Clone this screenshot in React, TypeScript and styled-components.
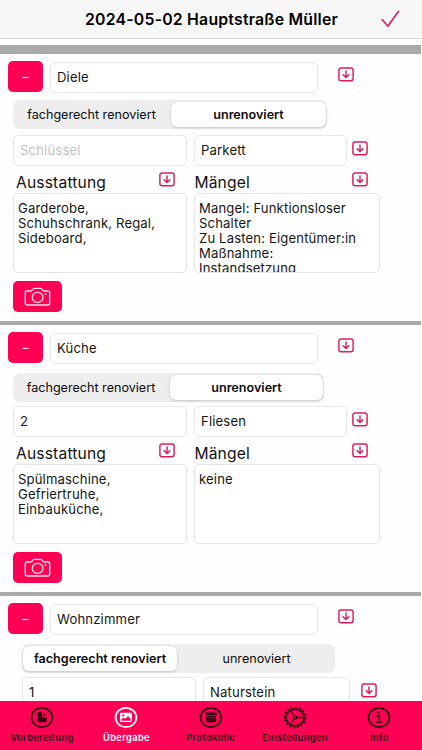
import React from "react";
import styled, { createGlobalStyle } from "styled-components";

const PINK = "#ff0055";
const ACCENT = "#dc1c5c";

const Global = createGlobalStyle`
  * { box-sizing: border-box; }
  html, body { margin: 0; padding: 0; background: #fff; }
  body { font-family: Inter, "Liberation Sans", sans-serif; color: #111; overflow: hidden; }
  svg { display: block; flex: none; }
`;

const Screen = styled.div`
  width: 422px;
  height: 750px;
  display: flex;
  flex-direction: column;
  overflow: hidden;
  background: #fefefe;
`;

const Header = styled.header`
  flex: none;
  height: 39px;
  display: grid;
  grid-template-columns: 60px 1fr 60px;
  align-items: center;
  background: #f7f7f7;
  border-bottom: 1px solid #d9d9d9;
`;

const Title = styled.h1`
  grid-column: 2;
  margin: 0;
  padding-left: 1px;
  text-align: center;
  white-space: nowrap;
  font-size: 15.8px;
  line-height: 37px;
  font-weight: 600;
  letter-spacing: 0.22px;
  color: #000;
`;

const Confirm = styled.button`
  border: 0;
  background: none;
  padding: 0 0 0 19px;
`;

const Content = styled.main`
  flex: 1;
  min-height: 0;
  overflow: hidden;
  padding-top: 6px;
`;

const Divider = styled.div<{ $height: number }>`
  width: 421px;
  height: ${(p) => p.$height}px;
  background: #a9a9a9;
`;

const RoomBox = styled.section<{ $height: number }>`
  height: ${(p) => p.$height}px;
  padding-top: 7px;
`;

const NameRow = styled.div`
  display: flex;
  height: 31px;
  padding-left: 8px;
`;

const RemoveButton = styled.button`
  width: 35px;
  height: 31px;
  margin-right: 7px;
  padding: 0;
  border: 0;
  border-radius: 5px;
  background: ${PINK};
  color: #ffe3ec;
  font: 500 12px/31px Inter, sans-serif;
`;

const Field = styled.div<{ $width: number; $placeholder?: boolean }>`
  width: ${(p) => p.$width}px;
  height: 31px;
  flex: none;
  padding-left: 6px;
  border: 1px solid #e8e8e8;
  border-radius: 5px;
  background: #fff;
  font-size: 13.1px;
  line-height: 29px;
  letter-spacing: 0.16px;
  color: ${(p) => (p.$placeholder ? "#c3c3c5" : "#151515")};
`;

const NameField = styled(Field)`
  margin-top: 1px;
`;

const PickButton = styled.button<{ $left: number; $top: number }>`
  margin: ${(p) => p.$top}px 0 0 ${(p) => p.$left}px;
  padding: 0;
  border: 0;
  background: none;
  width: 16px;
  height: 15px;
`;

const Segments = styled.div<{ $width: number; $first: number; $left: number; $top: number }>`
  display: grid;
  grid-template-columns: ${(p) => p.$first}px 1fr;
  width: ${(p) => p.$width}px;
  height: 29px;
  margin: ${(p) => p.$top}px 0 0 ${(p) => p.$left}px;
  padding: 2px 1px;
  border-radius: 7px;
  background: #eeeeef;
`;

const Segment = styled.div<{ $active: boolean }>`
  text-align: center;
  border-radius: 6px;
  white-space: nowrap;
  font-size: 12.6px;
  line-height: 25px;
  font-weight: ${(p) => (p.$active ? 600 : 400)};
  letter-spacing: 0;
  color: #0c0c0c;
  background: ${(p) => (p.$active ? "#fff" : "transparent")};
  box-shadow: ${(p) => (p.$active ? "0 1px 3px rgba(0,0,0,.17), 0 0 1px rgba(0,0,0,.12)" : "none")};

  &:first-child {
    padding-right: ${(p) => (p.$active ? 0 : 2)}px;
  }

  &:last-child {
    padding-left: ${(p) => (p.$active ? 0 : 2)}px;
  }
`;

const FieldRow = styled.div<{ $left: number; $top: number }>`
  display: flex;
  height: 31px;
  gap: 7px;
  margin: ${(p) => p.$top}px 0 0 ${(p) => p.$left}px;
`;

const Columns = styled.div`
  display: grid;
  grid-template-columns: 174px 186px;
  column-gap: 7px;
  margin-left: 13px;
`;

const Heading = styled.div<{ $indent: number; $gap: number }>`
  display: flex;
  justify-content: space-between;
  height: 27px;
  padding: 0 ${(p) => p.$gap}px 0 ${(p) => p.$indent}px;
  font-size: 15.6px;
  line-height: 33px;
  letter-spacing: 0.17px;
  color: #111;
`;

const Notes = styled.div`
  height: 80px;
  overflow: hidden;
  padding: 7px 4px 0;
  border: 1px solid #e6e6e6;
  border-radius: 5px;
  background: #fff;
  white-space: pre-line;
  font-size: 13.1px;
  line-height: 15px;
  letter-spacing: 0.15px;
  color: #151515;
`;

const PhotoButton = styled.button`
  display: flex;
  align-items: center;
  justify-content: center;
  width: 49px;
  height: 31px;
  margin: 8px 0 0 13px;
  padding: 0;
  border: 0;
  border-radius: 5px;
  background: ${PINK};
`;

const TabBar = styled.nav`
  flex: none;
  height: 49px;
  display: grid;
  grid-template-columns: repeat(5, 84.3px);
  background: ${PINK};
`;

const Tab = styled.div<{ $active: boolean }>`
  display: flex;
  flex-direction: column;
  align-items: center;
  padding-top: 5px;
  color: ${(p) => (p.$active ? "#fff" : "#300012")};
`;

const TabLabel = styled.span`
  margin-top: 3px;
  white-space: nowrap;
  font-size: 9.3px;
  line-height: 12px;
  font-weight: 600;
  letter-spacing: 0.37px;
`;

const DownIcon = () => (
  <svg width="16" height="15" viewBox="0 0 16 15" fill="none" stroke={ACCENT} strokeWidth="1.45" strokeLinecap="round" strokeLinejoin="round">
    <rect x="0.9" y="0.9" width="14.2" height="12.9" rx="2.2" />
    <path d="M8 3.9V10.4M5.1 7.8L8 10.5L10.9 7.8" />
  </svg>
);

const CheckIcon = () => (
  <svg width="20" height="18" viewBox="0 0 20 18" fill="none" stroke={ACCENT} strokeWidth="1.6" strokeLinecap="round" strokeLinejoin="round">
    <path d="M1.2 9.6L6.8 16.2L17.6 1.3" />
  </svg>
);

const CameraIcon = () => (
  <svg width="27" height="20" viewBox="0 0 27 20" fill="none" stroke="#ffe0ea" strokeWidth="1.35" strokeLinejoin="round">
    <path d="M3.3 4H6.8C8.4 4 8.6 1.3 10.2 1.3H16.7C18.3 1.3 18.5 4 20.1 4H23.8Q25.7 4 25.7 5.7V16.3Q25.7 18 23.8 18H3.3Q1.3 18 1.3 16.3V5.7Q1.3 4 3.3 4Z" />
    <ellipse cx="13.6" cy="10.4" rx="5.3" ry="5" />
    <circle cx="21.4" cy="7" r="1" fill="#ffe0ea" stroke="none" />
  </svg>
);

const Ring = ({ children }: { children: React.ReactNode }) => (
  <svg width="24" height="23" viewBox="0 0 24 23">
    <ellipse cx="12" cy="11.5" rx="10.4" ry="9.6" fill="none" stroke="currentColor" strokeWidth="1.8" />
    {children}
  </svg>
);

const DocumentIcon = () => (
  <Ring>
    <path d="M7.7 7Q7.7 6 8.7 6H12V10.2Q12 11 12.8 11H16.7V15.3Q16.7 16.3 15.7 16.3H8.7Q7.7 16.3 7.7 15.3Z M13 6.1L16.6 9.9H13Z" fill="currentColor" />
  </Ring>
);

const PhotoIcon = () => (
  <Ring>
    <path fillRule="evenodd" d="M7.2 6.7H16.8Q18 6.7 18 7.9V14.9Q18 16.1 16.8 16.1H7.2Q6 16.1 6 14.9V7.9Q6 6.7 7.2 6.7Z M7.2 14.8H16.8V13.2L14 10L11.4 13L9.7 11.6L7.2 13.6Z" fill="currentColor" />
    <circle cx="9.2" cy="9.3" r="1.1" fill={PINK} />
  </Ring>
);

const ArchiveIcon = () => (
  <Ring>
    <rect x="6.2" y="6.4" width="11.6" height="2.8" rx="0.7" fill="currentColor" />
    <path d="M7.2 10H16.8V15Q16.8 16.2 15.6 16.2H8.4Q7.2 16.2 7.2 15Z" fill="currentColor" />
    <path d="M10 11.8H14" stroke={PINK} strokeWidth="0.9" strokeLinecap="round" />
  </Ring>
);

const GearIcon = () => (
  <svg width="26" height="23" viewBox="0 0 26 23" fill="none" stroke="currentColor">
    <ellipse cx="13" cy="11.5" rx="10.8" ry="10" strokeWidth="1.8" pathLength="64" strokeDasharray="2 2" />
    <ellipse cx="13" cy="11.5" rx="9.1" ry="8.3" strokeWidth="1.8" />
    <circle cx="13" cy="11.5" r="1.6" strokeWidth="1.3" />
    <path d="M12.1 10L8.4 4.5M12.1 13L8.4 18.5M14.7 11.5H22" strokeWidth="1.3" />
  </svg>
);

const InfoIcon = () => (
  <Ring>
    <circle cx="11.7" cy="6.9" r="1.4" fill="currentColor" />
    <path d="M9.3 10H12.3V15.5M9 15.9H15.2" fill="none" stroke="currentColor" strokeWidth="1.6" />
  </Ring>
);

const Pick = ({ left, top }: { left: number; top: number }) => (
  <PickButton $left={left} $top={top}>
    <DownIcon />
  </PickButton>
);

interface RoomData {
  name: string;
  renovated: boolean;
  keys: string;
  floor: string;
  items?: string;
  defects?: string;
  inset: number;
  segmentWidth: number;
  firstSegment: number;
  segmentTop: number;
  height: number;
}

const rooms: RoomData[] = [
  {
    name: "Diele", renovated: false, keys: "", floor: "Parkett",
    items: "Garderobe,\nSchuhschrank, Regal,\nSideboard,",
    defects: "Mangel: Funktionsloser\nSchalter\nZu Lasten: Eigentümer:in\nMaßnahme:\nInstandsetzung",
    inset: 13, segmentWidth: 314, firstSegment: 157, segmentTop: 8, height: 267,
  },
  {
    name: "Küche", renovated: false, keys: "2", floor: "Fliesen",
    items: "Spülmaschine,\nGefriertruhe,\nEinbauküche,", defects: "keine",
    inset: 13, segmentWidth: 311, firstSegment: 156, segmentTop: 10, height: 267,
  },
  {
    name: "Wohnzimmer", renovated: true, keys: "1", floor: "Naturstein",
    inset: 22, segmentWidth: 313, firstSegment: 154, segmentTop: 10, height: 120,
  },
];

const Room = ({ room }: { room: RoomData }) => (
  <RoomBox $height={room.height}>
    <NameRow>
      <RemoveButton>–</RemoveButton>
      <NameField $width={268}>{room.name}</NameField>
      <Pick left={20} top={6} />
    </NameRow>
    <Segments $width={room.segmentWidth} $first={room.firstSegment} $left={room.inset} $top={room.segmentTop}>
      <Segment $active={room.renovated}>fachgerecht renoviert</Segment>
      <Segment $active={!room.renovated}>unrenoviert</Segment>
    </Segments>
    <FieldRow $left={room.inset} $top={14 - room.segmentTop}>
      <Field $width={174} $placeholder={!room.keys}>{room.keys || "Schlüssel"}</Field>
      <Field $width={room.inset === 13 ? 153 : 147}>{room.floor}</Field>
      <Pick left={room.inset === 13 ? -2 : 4} top={6} />
    </FieldRow>
    {room.items && (
      <>
        <Columns>
          <Heading $indent={3} $gap={12}>Ausstattung<Pick left={0} top={6} /></Heading>
          <Heading $indent={0.4} $gap={12}>Mängel<Pick left={0} top={6} /></Heading>
          <Notes>{room.items}</Notes>
          <Notes>{room.defects}</Notes>
        </Columns>
        <PhotoButton><CameraIcon /></PhotoButton>
      </>
    )}
  </RoomBox>
);

const tabs = [
  { label: "Vorbereitung", icon: <DocumentIcon /> },
  { label: "Übergabe", icon: <PhotoIcon />, active: true },
  { label: "Protokolle", icon: <ArchiveIcon /> },
  { label: "Einstellungen", icon: <GearIcon /> },
  { label: "Info", icon: <InfoIcon /> },
];

export default function App() {
  return (
    <Screen>
      <Global />
      <Header>
        <Title>2024-05-02 Hauptstraße Müller</Title>
        <Confirm><CheckIcon /></Confirm>
      </Header>
      <Content>
        {rooms.map((room, i) => (
          <React.Fragment key={room.name}>
            <Divider $height={i === 0 ? 9 : 4} />
            <Room room={room} />
          </React.Fragment>
        ))}
      </Content>
      <TabBar>
        {tabs.map((tab) => (
          <Tab key={tab.label} $active={!!tab.active}>
            {tab.icon}
            <TabLabel>{tab.label}</TabLabel>
          </Tab>
        ))}
      </TabBar>
    </Screen>
  );
}
